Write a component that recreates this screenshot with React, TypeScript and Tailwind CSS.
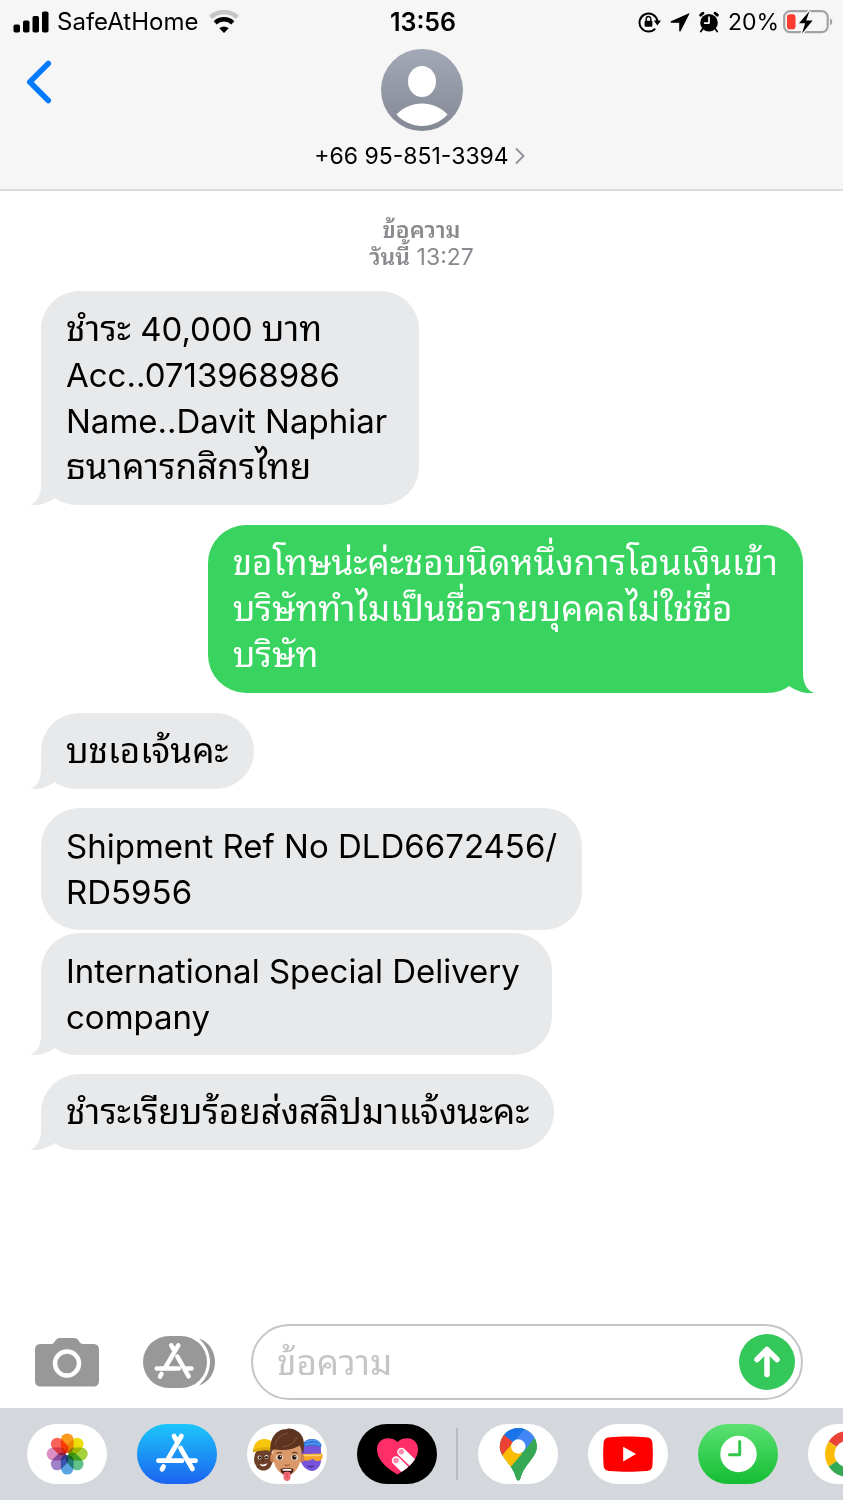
import type { ReactNode } from "react";

const FONT =
  "font-['Inter','Noto_Sans_Thai_Looped','Noto_Looped_Thai','Loma','Garuda','Waree','Noto_Sans_Thai','Noto_Sans',sans-serif]";

function StatusBar() {
  return (
    <div className="grid h-11 grid-cols-[1fr_auto_1fr] items-center pl-[13px] pr-[10px] text-2xl leading-none text-black">
      <div className="flex items-center gap-2">
        <svg width="36" height="22" viewBox="0 0 36 22" aria-hidden="true">
          <rect x="0.5" y="13.5" width="6.5" height="8" rx="1.8" />
          <rect x="10" y="9.5" width="6.5" height="12" rx="1.8" />
          <rect x="19.5" y="5" width="6.5" height="16.5" rx="1.8" />
          <rect x="29" y="0.5" width="6.5" height="21" rx="1.8" />
        </svg>
        <span>SafeAtHome</span>
        <svg className="ml-[2px]" width="32" height="24" viewBox="0 0 32 24" fill="none" aria-hidden="true">
          <path d="M2.6 7.4a19.500 19.500 0 0 1 26.800 0" stroke="#c6c6c6" strokeWidth="4.600" />
          <path d="M7.200 12.900a12.600 12.600 0 0 1 17.600 0" stroke="#000" strokeWidth="4.400" />
          <path d="M11.300 18.200a7 7 0 0 1 9.400 0L16 23z" fill="#000" />
        </svg>
      </div>
      <div className="text-[25px] font-semibold">13:56</div>
      <div className="flex items-center justify-end">
        <svg className="mr-2" width="24" height="22" viewBox="0 0 24 22" fill="none" aria-hidden="true">
          <path d="M17.200 17.600A9 9 0 1 1 19.400 10" stroke="#000" strokeWidth="2" />
          <path d="M15.800 9.600h7.200l-3.600 4.800z" fill="#000" />
          <rect x="6.600" y="9.800" width="7.800" height="6" rx="1" fill="#000" />
          <path d="M8.200 10V7.800a2.300 2.300 0 0 1 4.600 0V10" stroke="#000" strokeWidth="1.400" />
        </svg>
        <svg className="mr-2" width="20" height="20" viewBox="0 0 20 20" aria-hidden="true">
          <path d="M19 1.200 1 9.300c-.8.500-.6 1.400.3 1.400H9.200v7.900c0 1 1.100 1.200 1.500.300L19.300 2c.3-.6 0-1-.3-.8z" />
        </svg>
        <svg className="mr-2" width="22" height="22" viewBox="0 0 22 22" fill="none" aria-hidden="true">
          <circle cx="11" cy="11.700" r="8.800" fill="#000" />
          <path d="M2.600 4.200 5 2.200M19.400 4.200l-2.400-2" stroke="#000" strokeWidth="2.800" strokeLinecap="round" />
          <path d="M4.600 18 2.800 20.500M17.400 18l1.800 2.500" stroke="#000" strokeWidth="1.800" strokeLinecap="round" />
          <path d="M11 6.200v5.900H6.600" stroke="#fff" strokeWidth="1.700" strokeLinecap="round" strokeLinejoin="round" />
        </svg>
        <span className="mr-1 text-[23px]">20%</span>
        <svg width="50" height="24" viewBox="0 0 50 24" fill="none" aria-hidden="true">
          <rect x="1.200" y="1.200" width="43.500" height="21" rx="6" stroke="#a3a3a5" strokeWidth="2.200" />
          <path d="M47 8.300c3 1 3 6 0 7z" fill="#a3a3a5" />
          <rect x="4" y="4.200" width="8.500" height="15" rx="2.800" fill="#fb3b30" />
          <path
            d="M26.500 1 16 13.200h6.200L19 23.400 29.600 10.500h-6.400z"
            fill="#000"
            stroke="#f6f6f6"
            strokeWidth="3"
            paintOrder="stroke"
          />
        </svg>
      </div>
    </div>
  );
}

function ContactHeader() {
  return (
    <header className="border-b-2 border-[#dcdcdd] bg-[#f6f6f6]">
      <StatusBar />
      <div className="grid grid-cols-[1fr_auto_1fr] items-start pb-[18px] pt-[5px]">
        <button type="button" aria-label="ย้อนกลับ" className="ml-6 mt-[9px] w-fit">
          <svg width="30" height="48" viewBox="0 0 30 48" fill="none" aria-hidden="true">
            <path d="M24.300 5.500 5.800 24l18.500 18.500" stroke="#007aff" strokeWidth="5.500" strokeLinecap="round" strokeLinejoin="round" />
          </svg>
        </button>
        <button type="button" className="flex flex-col items-center gap-[10px]">
          <svg width="82" height="82" viewBox="0 0 82 82" aria-hidden="true">
            <defs>
              <linearGradient id="avatar" x1="0" y1="0" x2="0" y2="1">
                <stop offset="0" stopColor="#a3a8b6" />
                <stop offset="1" stopColor="#858995" />
              </linearGradient>
            </defs>
            <circle cx="41" cy="41" r="41" fill="url(#avatar)" />
            <ellipse cx="41" cy="32.500" rx="14" ry="15.500" fill="#fff" />
            <path d="M15.500 65.500C22 58.500 31 54.500 41 54.500s19 4 25.500 11C59.500 73 50.500 77 41 77s-18.500-4-25.500-11.500z" fill="#fff" />
          </svg>
          <span className="flex items-center gap-[6px] text-[23px] leading-[30px] text-black">
            +66 95-851-3394
            <svg className="mr-1" width="10" height="18" viewBox="0 0 10 18" fill="none" aria-hidden="true">
              <path d="M1.500 2 8.500 9l-7 7" stroke="#8e929d" strokeWidth="1.900" strokeLinecap="round" strokeLinejoin="round" />
            </svg>
          </span>
        </button>
      </div>
    </header>
  );
}

const TAIL = "M11 0V20C11 31 7 37 0 40C9 41 18 38 25 33C30 37 37 40 48 40V0Z";

/* Thai glyphs are drawn a little larger than Latin ones so that both look the same size. */
function MixedText({ text }: { text: string }) {
  return (
    <>
      {text.split(/([\u0e00-\u0e7f]+)/).map((part, i) =>
        i % 2 ? (
          <span key={i} className="text-[35px] leading-none">
            {part}
          </span>
        ) : (
          part
        ),
      )}
    </>
  );
}

interface BubbleProps {
  lines: string[];
  sent?: boolean;
  tail?: boolean;
  roomy?: boolean;
  className?: string;
}

function Bubble({ lines, sent, tail = true, roomy, className = "" }: BubbleProps) {
  return (
    <li className={`flex ${sent ? "justify-end" : ""} ${className}`}>
      <div
        className={`relative rounded-[38px] py-[15px] pl-[25px] text-[33px] leading-[46px] ${roomy ? "pr-8" : "pr-[25px]"} ${
          sent ? "bg-[#38d45f] text-white" : "bg-[#e8e9eb] text-black"
        } ${tail ? (sent ? "rounded-br-none" : "rounded-bl-none") : ""}`}
      >
        {tail && (
          <span className={`absolute bottom-0 h-10 w-12 bg-white ${sent ? "-right-[11px] -scale-x-100" : "-left-[11px]"}`}>
            <svg className="block" width="48" height="40" viewBox="0 0 48 40" fill={sent ? "#38d45f" : "#e8e9eb"} aria-hidden="true">
              <path d={TAIL} />
            </svg>
          </span>
        )}
        <p className="relative whitespace-nowrap">
          {lines.map((line) => (
            <span key={line} className="block h-[46px]">
              <MixedText text={line} />
            </span>
          ))}
        </p>
      </div>
    </li>
  );
}

function StoreGlyph() {
  return (
    <g fill="none" stroke="#fff" strokeWidth="4.800" strokeLinecap="round">
      <path d="M44.400 12 31 35M37 12l3.400 6M43.500 24l12 21M21.500 36.700H45M52 36.700h6.500M26.600 42.500l-1.600 2.800" />
    </g>
  );
}

function Composer() {
  return (
    <form className="flex items-center bg-white pb-2 pl-[35px] pr-10" onSubmit={(e) => e.preventDefault()}>
      <button type="button" aria-label="กล้อง" className="mr-11">
        <svg width="64" height="50" viewBox="0 0 64 50" aria-hidden="true">
          <path
            d="M6 7h10c2 0 3-1.200 4-2.700C21.500 1.800 22.500 1 25 1h14c2.500 0 3.500.8 5 3.300C45 5.800 46 7 48 7h10c4 0 6 2 6 6v30.500c0 4-2 6-6 6H6c-4 0-6-2-6-6V13c0-4 2-6 6-6z"
            fill="#989898"
          />
          <circle cx="32" cy="26.500" r="12" fill="none" stroke="#fff" strokeWidth="4.500" />
        </svg>
      </button>
      <button type="button" aria-label="แอพ" className="mr-9">
        <svg width="72" height="52" viewBox="0 0 72 52" aria-hidden="true">
          <path d="M56 2.500C66 6 72 15 72 26s-6 20-16 23.500C62 44 67 36 67 26S62 8 56 2.500z" fill="#989898" />
          <rect width="64" height="52" rx="26" fill="#989898" />
          <g transform="translate(-6.500 -2) scale(.94)">
            <StoreGlyph />
          </g>
        </svg>
      </button>
      <div className="flex h-[76px] min-w-0 flex-1 items-center rounded-full border-2 border-[#c5c5c8] pl-6 pr-[6px]">
        <input
          type="text"
          aria-label="ข้อความ"
          placeholder="ข้อความ"
          className="h-16 min-w-0 flex-1 bg-transparent text-[35px] text-black outline-none placeholder:text-[#c5c5c8]"
        />
        <button type="submit" aria-label="ส่ง">
          <svg width="56" height="56" viewBox="0 0 56 56" aria-hidden="true">
            <circle cx="28" cy="28" r="28" fill="#34c759" />
            <path d="M28 40.500V16M18 25.500 28 15.500l10 10" fill="none" stroke="#fff" strokeWidth="5.500" strokeLinecap="round" strokeLinejoin="round" />
          </svg>
        </button>
      </div>
    </form>
  );
}

function Pill({ label, fill, children }: { label: string; fill: string; children: ReactNode }) {
  return (
    <button type="button" aria-label={label} className="shrink-0">
      <svg width="80" height="60" viewBox="0 0 80 60" aria-hidden="true">
        <rect width="80" height="60" rx="30" fill={fill} />
        {children}
      </svg>
    </button>
  );
}

const PETALS = ["#fb9a1c", "#ecdf0c", "#a5d23a", "#62c08c", "#5aa5e0", "#a082c8", "#dc90c4", "#fb6458"];

function PhotosIcon() {
  return (
    <g>
      <g style={{ isolation: "isolate" }}>
        {PETALS.map((color, i) => (
          <rect
            key={color}
            x="33.800"
            y="9.500"
            width="12.800"
            height="19.800"
            rx="6.400"
            fill={color}
            transform={`rotate(${i * 45} 40.200 30)`}
            style={{ mixBlendMode: "multiply" }}
          />
        ))}
      </g>
      <circle cx="40.200" cy="30" r="1.300" fill="#fff" />
    </g>
  );
}

function MemojiIcon() {
  return (
    <g>
      <g>
        <ellipse cx="16.500" cy="35" rx="9.500" ry="11.500" fill="#6d4029" />
        <path d="M6 28.500C6 19.500 11 15 17.500 15S27 19 28 27.500c-7-2-15-1.500-22 1z" fill="#f6c60c" />
        <path d="M6 28.500c7-3 15-3.500 22-1v-3c-8-2-15-1.500-21.700 1z" fill="#dfa908" />
        <circle cx="12.500" cy="33.500" r="1.900" fill="#fff" />
        <circle cx="19.500" cy="33" r="1.900" fill="#fff" />
        <circle cx="12.800" cy="33.600" r="1.300" fill="#1f120b" />
        <circle cx="19.500" cy="33.200" r="1.300" fill="#1f120b" />
        <path d="M12.500 40c3 1 5.500.5 8-1-.6 3.500-6 4.800-8 1z" fill="#fff" />
        <path d="M16 34.500c-1 2-1.500 3 .8 3" fill="none" stroke="#4a2817" />
      </g>
      <g>
        <path d="M54 25c0-5 4-9.500 10-9.500S74 19 74 26v10c0 6-4 10.500-9 11-5-.5-9-4-11-9z" fill="#7654d9" />
        <path d="M56 23c0-5 4-8.500 10-8 5 .2 9 4 8.500 8-6-2-12-2-18.500 0z" fill="#2f74d8" />
        <path d="M59 18c5-2.500 10-2.500 14 1M58 21c5-2 11-2 15 0" stroke="#5b9df0" strokeWidth="1.200" fill="none" />
        <path d="M55 30l20-.5c1.500 3 .5 7-3.500 7.500-3 .3-5-1-6-2.500-1.500 2-5 3-10.500 1.500z" fill="#f5a524" />
        <path d="M56 31.500h18" stroke="#ffd774" strokeWidth="1.500" />
        <path d="M61 42c2 1 4 1 6-.5" fill="none" stroke="#4b2fa4" strokeWidth="1.500" />
      </g>
      <ellipse cx="25.500" cy="34" rx="2.500" ry="4.500" fill="#c98254" />
      <ellipse cx="54.500" cy="34" rx="2.500" ry="4.500" fill="#c98254" />
      <path d="M25.500 25C26 14 32 9 40 9s14.500 5 14.500 17c0 11-3 18.500-7.500 22.500-2.500 2-5 3-7 3s-4.500-1-7-3C28.500 45 25.500 37 25.500 25z" fill="#d9996b" />
      <path d="M23.800 30C21.500 16 28 5 40 5c2-1 7 0 9 1.500C56.500 10 58.500 18 56 30c-1-3-2-5-3-8.500-5 2.500-10 4.500-17 4.500-4 0-7.500-.5-10-.5-1 1.500-1.700 3-2.200 4.500z" fill="#5d3420" />
      <path d="M28 21c1-6 6-11 13-12M36 23c7-1 12-5 14-10" fill="none" stroke="#7b4a31" strokeWidth="1.300" />
      <path d="M29.500 29.500c1.800-1.200 3.800-1.200 5.500-.4M45 29c1.800-1 3.600-.8 5.300.4" fill="none" stroke="#68402b" strokeWidth="1.200" />
      <ellipse cx="32.500" cy="33.500" rx="3.200" ry="2.800" fill="#fff" />
      <ellipse cx="47.500" cy="33.500" rx="3.200" ry="2.800" fill="#fff" />
      <circle cx="32.700" cy="33.400" r="2.300" fill="#2b170c" />
      <circle cx="47.300" cy="33.400" r="2.300" fill="#2b170c" />
      <circle cx="33.400" cy="32.600" r="0.700" fill="#fff" />
      <circle cx="48" cy="32.600" r="0.700" fill="#fff" />
      <path d="M37.500 40.500c1.500 1.300 3.500 1.300 5 0" fill="none" stroke="#a8643c" strokeWidth="1.400" />
      <path d="M33.500 45c4-1.500 9-1.500 13 0 0 3.500-3 6.500-6.500 6.500s-6.500-3-6.500-6.500z" fill="#4a1712" />
      <path d="M35.500 45.200c3-.7 6-.7 9 0v1.500h-9z" fill="#fff" />
      <path d="M36.500 48.500c2-1 5-1 7 0v4.500c0 2.500-1.500 4-3.500 4s-3.500-1.500-3.500-4z" fill="#f06c74" />
      <path d="M40 49v5" stroke="#cf454f" strokeWidth="1" />
    </g>
  );
}

const HEART = "M40.500 50.500C34 46.500 20 38 20 25.500 20 18.500 25 14.300 30.500 14.300c4.500 0 8 1.700 10 3.700 2-2 5.500-3.700 10-3.700C56 14.300 61 18.500 61 25.500c0 12.500-14 21-20.500 25z";
const PIN = "M40.300 56.500c-1.500 0-2-1.500-2.400-3-1.700-6.500-5-10.500-8.700-15.500C25 32.500 21.800 28.500 21.800 22.500a18.500 18.500 0 0 1 37 0c0 6-3.200 10-7.400 15.500-3.700 5-7 9-8.700 15.500-.4 1.500-.9 3-2.400 3z";

function AppDock() {
  return (
    <nav aria-label="แอพ iMessage" className="flex h-[92px] items-center overflow-hidden bg-[#d4d7dc] pl-[27px]">
      <svg className="absolute" width="0" height="0" aria-hidden="true">
        <defs>
          <linearGradient id="store" x1="0" y1="0" x2="0" y2="1">
            <stop offset="0" stopColor="#1cc6fb" />
            <stop offset="1" stopColor="#1b63f0" />
          </linearGradient>
          <linearGradient id="clock" x1="0" y1="0" x2="0" y2="1">
            <stop offset="0" stopColor="#5be173" />
            <stop offset="1" stopColor="#14bd33" />
          </linearGradient>
          <clipPath id="heart">
            <path d={HEART} />
          </clipPath>
          <clipPath id="pin">
            <path d={PIN} />
          </clipPath>
        </defs>
      </svg>
      <div className="flex shrink-0 gap-[30px]">
        <Pill label="รูปภาพ" fill="#fff">
          <PhotosIcon />
        </Pill>
        <Pill label="App Store" fill="url(#store)">
          <StoreGlyph />
        </Pill>
        <Pill label="Memoji" fill="#fff">
          <MemojiIcon />
        </Pill>
        <Pill label="Digital Touch" fill="#000">
          <path d={HEART} fill="#ff2d68" />
          <g clipPath="url(#heart)">
            <g fill="none" stroke="#fff" strokeWidth="8.500" strokeLinecap="round">
              <path d="m44.500 28 20 19.500M39 36.500l20 20" />
            </g>
            <circle cx="44.300" cy="27.800" r="2.700" fill="#ff8aa8" />
            <circle cx="39" cy="36.500" r="2.700" fill="#ff8aa8" />
          </g>
        </Pill>
      </div>
      <div className="ml-[19px] mr-5 h-[52px] w-[2px] shrink-0 bg-[#b7babf]" />
      <div className="flex shrink-0 gap-[30px]">
        <Pill label="Google Maps" fill="#fff">
          <g clipPath="url(#pin)">
            <rect x="20" width="42" height="60" fill="#34a853" />
            <path d="M47 4 34 19.500l6.300 3 5.300 5.500L57.500 13 60 4z" fill="#4285f4" />
            <path d="m20 59 14-17.500L57.500 13.500l5 3v42z" fill="#34a853" />
            <path d="M20 57.500V35L34.500 19l9.500 10.800L34 41.500z" fill="#fbbc04" />
            <path d="M18 4l8.200 6.700L35.500 18 24 31.500 18 36z" fill="#ea4335" />
            <path d="M26.200 10.700 24 0h24l-1.300 5-11.500 13.500z" fill="#1a73e8" />
          </g>
          <circle cx="40.300" cy="22.500" r="7.200" fill="#fff" />
        </Pill>
        <Pill label="YouTube" fill="#fff">
          <path d="M22 13.200c10-.9 26-.9 36 0 4.500.4 6.200 2 6.500 6.500.5 7 .5 14 0 21-.3 4.500-2 6-6.500 6.400-10 .9-26 .9-36 0-4.500-.4-6.200-2-6.500-6.400-.5-7-.5-14 0-21 .3-4.500 2-6.100 6.500-6.500z" fill="#f00" />
          <path d="M35.200 22.800v14.600L48 30.100z" fill="#fff" />
        </Pill>
        <Pill label="นาฬิกา" fill="url(#clock)">
          <circle cx="40.500" cy="30" r="18.200" fill="#fff" />
          <path d="M41.700 17.500v13.200H31.500" fill="none" stroke="#33c84c" strokeWidth="3" strokeLinecap="round" strokeLinejoin="round" />
        </Pill>
        <Pill label="Google" fill="#fff">
          <g fill="none" strokeWidth="9.500">
            <path d="M24.700 20.100A18.200 18.200 0 0 1 53 17.300" stroke="#ea4335" />
            <path d="M24.700 39.900a18.200 18.200 0 0 1 0-19.800" stroke="#fbbc04" />
            <path d="M24.700 39.900A18.200 18.200 0 0 0 52 43.700" stroke="#34a853" />
            <path d="M52 43.700A18.200 18.200 0 0 0 58.200 30H41" stroke="#4285f4" />
          </g>
        </Pill>
      </div>
    </nav>
  );
}

export default function App() {
  return (
    <div className={`flex min-h-screen flex-col bg-white ${FONT}`}>
      <ContactHeader />
      <main className="flex flex-1 flex-col pt-[26px]">
        <div className="text-center text-[23px] leading-[27px] text-[#8a8a8e]">
          <p className="font-semibold">ข้อความ</p>
          <p>
            <span className="font-semibold">วันนี้</span> 13:27
          </p>
        </div>
        <ul className="flex flex-col pl-[41px] pr-10 pt-5">
          <Bubble roomy lines={["ชำระ 40,000 บาท", "Acc..0713968986", "Name..Davit Naphiar", "ธนาคารกสิกรไทย"]} />
          <Bubble
            className="mt-5"
            sent
            lines={["ขอโทษน่ะค่ะชอบนิดหนึ่งการโอนเงินเข้า", "บริษัททำไมเป็นชื่อรายบุคคลไม่ใช่ชื่อ", "บริษัท"]}
          />
          <Bubble className="mt-5" lines={["บชเอเจ้นคะ"]} />
          <Bubble className="mt-[19px]" tail={false} lines={["Shipment Ref No DLD6672456/", "RD5956"]} />
          <Bubble className="mt-[3px]" roomy lines={["International Special Delivery", "company"]} />
          <Bubble className="mt-[19px]" lines={["ชำระเรียบร้อยส่งสลิปมาแจ้งนะคะ"]} />
        </ul>
      </main>
      <Composer />
      <AppDock />
    </div>
  );
}
